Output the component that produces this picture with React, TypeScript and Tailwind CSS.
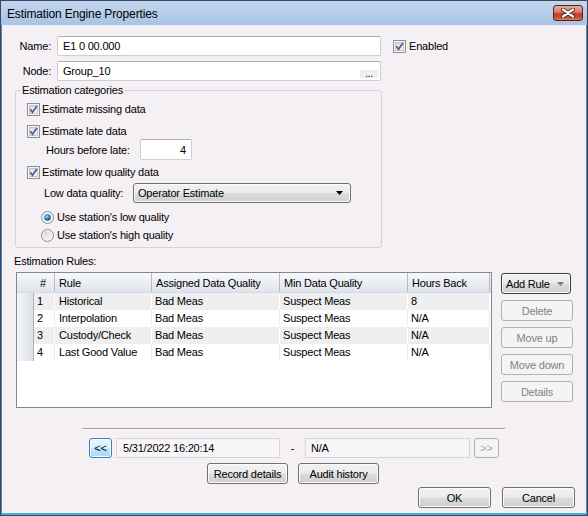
import type { ReactNode } from 'react'

const btnFace =
  'flex items-center rounded-[3px] border bg-[linear-gradient(#f2f2f2_0%,#ebebeb_48%,#dddddd_52%,#cfcfcf_100%)] shadow-[inset_0_0_0_1px_#fbfbfb] text-black'
const btn = `${btnFace} justify-center border-[#707070]`
const btnOff =
  'flex items-center justify-center rounded-[3px] border border-[#adb2b5] bg-[#f4f4f4] text-[#838383]'
const btnHot =
  'flex items-center justify-center rounded-[3px] border border-[#3c7fb1] bg-[linear-gradient(#eaf6fd_0%,#d9f0fc_48%,#bee6fd_52%,#a7d9f5_100%)] shadow-[inset_0_0_0_1px_#f4fbff] text-black'
const field =
  'flex items-center rounded-[2px] border border-[#ccd0d6] border-t-[#abadb3] bg-white'

const CheckBox = () => (
  <svg width="13" height="13" viewBox="0 0 13 13" className="shrink-0" aria-hidden="true">
    <defs>
      <linearGradient id="cb-fill" x1="0" y1="0" x2="1" y2="1">
        <stop offset="0" stopColor="#d8d9db" />
        <stop offset="1" stopColor="#fafafa" />
      </linearGradient>
    </defs>
    <rect x="0.5" y="0.5" width="12" height="12" fill="#f6f6f6" stroke="#8e8f8f" />
    <rect x="2.5" y="2.5" width="8" height="8" fill="url(#cb-fill)" stroke="#c2c4c8" />
    <path d="M3.3 6.3 L5.5 9.2 L9.9 3.1" fill="none" stroke="#4a5f95" strokeWidth="1.7" />
  </svg>
)

const Radio = ({ on }: { on?: boolean }) => (
  <svg width="13" height="13" viewBox="0 0 13 13" className="shrink-0" aria-hidden="true">
    <defs>
      <linearGradient id="rd-ring" x1="0" y1="0" x2="1" y2="1">
        <stop offset="0" stopColor="#d4d4d4" />
        <stop offset="1" stopColor="#fbfbfb" />
      </linearGradient>
      <radialGradient id="rd-on" cx="0.4" cy="0.35" r="0.7">
        <stop offset="0" stopColor="#b9e6ff" />
        <stop offset="0.45" stopColor="#2d8ad0" />
        <stop offset="1" stopColor="#0c427f" />
      </radialGradient>
    </defs>
    <circle cx="6.5" cy="6.5" r="6" fill="#f4f4f4" stroke="#8c8d8f" />
    <circle cx="6.5" cy="6.5" r="4.2" fill="url(#rd-ring)" />
    {on && <circle cx="6.5" cy="6.5" r="3.2" fill="url(#rd-on)" />}
  </svg>
)

const Caret = ({ color }: { color: string }) => (
  <svg width="7" height="4" viewBox="0 0 7 4" className="shrink-0" aria-hidden="true">
    <path d="M0 0 H7 L3.5 4 Z" fill={color} />
  </svg>
)

const CheckRow = ({ children, className }: { children: ReactNode; className: string }) => (
  <div className={`flex h-[16px] items-center gap-[2px] ${className}`}>
    <CheckBox />
    <span>{children}</span>
  </div>
)

const RadioRow = ({ on, children, className }: { on?: boolean; children: ReactNode; className: string }) => (
  <div className={`flex h-[16px] items-center gap-[3px] ${className}`}>
    <Radio on={on} />
    <span>{children}</span>
  </div>
)

const rules = [
  { n: 1, rule: 'Historical', assigned: 'Bad Meas', min: 'Suspect Meas', hours: '8' },
  { n: 2, rule: 'Interpolation', assigned: 'Bad Meas', min: 'Suspect Meas', hours: 'N/A' },
  { n: 3, rule: 'Custody/Check', assigned: 'Bad Meas', min: 'Suspect Meas', hours: 'N/A' },
  { n: 4, rule: 'Last Good Value', assigned: 'Bad Meas', min: 'Suspect Meas', hours: 'N/A' },
]

const RulesTable = () => (
  <div className="h-[136px] w-[476px] border border-[#828790] bg-white">
    <div className="flex h-[20px] items-center border-b border-[#d5dae3] bg-[linear-gradient(#f7f8fa,#dfe4ec)]">
      <div className="h-full w-[38px] border-r border-[#b3bbc9] pl-[23px] leading-[20px]">#</div>
      <div className="h-full w-[97px] border-r border-[#b3bbc9] pl-[4px] leading-[20px]">Rule</div>
      <div className="h-full w-[128px] border-r border-[#b3bbc9] pl-[4px] leading-[20px]">Assigned Data Quality</div>
      <div className="h-full w-[128px] border-r border-[#b3bbc9] pl-[4px] leading-[20px]">Min Data Quality</div>
      <div className="h-full w-[82px] border-r border-[#b3bbc9] pl-[4px] leading-[20px]">Hours Back</div>
    </div>
    {rules.map((r) => {
      const odd = r.n % 2 === 1
      const cell = odd
        ? 'h-full border-r border-white bg-[#efefef]'
        : 'h-full border-r border-[#ededed] bg-white'
      return (
        <div key={r.n} className="flex h-[17px] leading-[17px]">
          <div className="h-full w-[17px] border-r border-[#a9b1bf] bg-[linear-gradient(90deg,#f3f5f8,#dde2ea)]" />
          <div className={`${cell} w-[21px] pl-[3px]`}>{r.n}</div>
          <div className={`${cell} w-[97px] pl-[4px]`}>{r.rule}</div>
          <div className={`${cell} w-[128px] pl-[3px]`}>{r.assigned}</div>
          <div className={`${cell} w-[128px] pl-[3px]`}>{r.min}</div>
          <div className={`${cell} w-[82px] pl-[3px]`}>{r.hours}</div>
        </div>
      )
    })}
  </div>
)

export default function App() {
  return (
    <div className="flex h-[516px] w-[588px] flex-col border border-[#37475e] font-['Liberation_Sans',Arial,sans-serif] text-[11px] leading-[14px] tracking-[-0.2px] text-black">
      {/* title bar */}
      <div className="flex h-[24px] shrink-0 items-start justify-between bg-[linear-gradient(#c2d6ee,#a8c4e6)] pl-[6px] pr-[4px]">
        <span className="mt-[6px] text-[12px] tracking-[-0.15px]">Estimation Engine Properties</span>
        <div className="mt-[4px] flex h-[16px] w-[30px] items-center justify-center rounded-[3px] border border-[#5b1c15] bg-[linear-gradient(#e8ab9b_0%,#d47d68_45%,#c0442c_52%,#c44a30_78%,#d9805f_100%)]">
          <svg width="14" height="10" viewBox="0 0 14 10" aria-hidden="true">
            <path d="M2 1.5 L12 8.5 M12 1.5 L2 8.5" stroke="#4a2520" strokeWidth="4" strokeLinecap="round" />
            <path d="M2 1.5 L12 8.5 M12 1.5 L2 8.5" stroke="#ffffff" strokeWidth="2.2" strokeLinecap="round" />
          </svg>
        </div>
      </div>

      {/* body */}
      <div className="flex flex-1 flex-col border-x border-b-2 border-x-[#5b7fae] border-b-[#3fb1dc] bg-[#f4f0f4]">
        <div className="mt-[11px] flex h-[20px] items-center">
          <span className="w-[49px] text-right">Name:</span>
          <div className={`${field} ml-[6px] h-[20px] w-[324px] pl-[5px]`}>E1 0 00.000</div>
          <div className="ml-[12px] flex items-center gap-[3px]">
            <CheckBox />
            <span>Enabled</span>
          </div>
        </div>

        <div className="mt-[5px] flex h-[20px] items-center">
          <span className="w-[49px] text-right">Node:</span>
          <div className={`${field} ml-[6px] h-[20px] w-[324px] justify-between pl-[5px]`}>
            <span>Group_10</span>
            <span className="mr-[2px] mt-[5px] flex h-[8px] w-[18px] items-end justify-center bg-[#efefef] text-[10px] leading-[8px]">...</span>
          </div>
        </div>

        <fieldset className="ml-[13px] mt-[2px] w-[367px] rounded-[3px] border border-[#d0d4da] pb-[4px]">
          <legend className="ml-[5px] px-[1px] leading-[14px]">Estimation categories</legend>
          <CheckRow className="mt-[4px] pl-[11px]">Estimate missing data</CheckRow>
          <CheckRow className="mt-[6px] pl-[11px]">Estimate late data</CheckRow>
          <div className="flex h-[21px] items-center pl-[30px]">
            <span className="w-[94px]">Hours before late:</span>
            <div className={`${field} h-[21px] w-[52px] justify-end pr-[5px]`}>4</div>
          </div>
          <CheckRow className="mt-[4px] pl-[11px]">Estimate low quality data</CheckRow>
          <div className="mt-[3px] flex h-[20px] items-center pl-[28px]">
            <span className="w-[89px]">Low data quality:</span>
            <div className={`${btnFace} h-[20px] w-[218px] justify-between border-[#707070] pl-[4px] pr-[7px]`}>
              <span>Operator Estimate</span>
              <Caret color="#000000" />
            </div>
          </div>
          <RadioRow on className="mt-[6px] pl-[25px]">Use station's low quality</RadioRow>
          <RadioRow className="mt-[2px] pl-[25px]">Use station's high quality</RadioRow>
        </fieldset>

        <div className="ml-[12px] mt-[6px] h-[14px]">Estimation Rules:</div>

        <div className="ml-[14px] mt-[4px] flex items-start">
          <RulesTable />
          <div className="ml-[9px] mt-[1px] flex w-[72px] flex-col gap-[6px]">
            <div className={`${btnFace} h-[21px] w-[70px] justify-between border-[#3d3d3d] pl-[4px] pr-[6px]`}>
              <span>Add Rule</span>
              <Caret color="#7c7c7c" />
            </div>
            <div className={`${btnOff} h-[21px] w-[72px]`}>Delete</div>
            <div className={`${btnOff} h-[21px] w-[72px]`}>Move up</div>
            <div className={`${btnOff} h-[21px] w-[72px]`}>Move down</div>
            <div className={`${btnOff} h-[21px] w-[72px]`}>Details</div>
          </div>
        </div>

        <div className="ml-[80px] mt-[20px] h-[2px] w-[423px] border-b border-t border-b-white border-t-[#a0a0a0]" />

        <div className="ml-[87px] mt-[8px] flex h-[20px] items-center">
          <div className={`${btnHot} h-[20px] w-[23px]`}>&lt;&lt;</div>
          <div className="ml-[4px] flex h-[20px] w-[164px] items-center border border-[#d2d5da] bg-[#f7f5f7] pl-[6px]">5/31/2022 16:20:14</div>
          <span className="w-[25px] text-center">-</span>
          <div className="flex h-[20px] w-[165px] items-center border border-[#d2d5da] bg-[#f7f5f7] pl-[5px]">N/A</div>
          <div className={`${btnOff} ml-[4px] h-[20px] w-[25px] text-[#a8a8a8]`}>&gt;&gt;</div>
        </div>

        <div className="ml-[205px] mt-[5px] flex gap-[10px]">
          <div className={`${btn} h-[21px] w-[81px]`}>Record details</div>
          <div className={`${btn} h-[21px] w-[81px]`}>Audit history</div>
        </div>

        <div className="mr-[11px] mt-[3px] flex justify-end gap-[11px]">
          <div className={`${btn} h-[21px] w-[73px]`}>OK</div>
          <div className={`${btn} h-[21px] w-[73px]`}>Cancel</div>
        </div>
      </div>
    </div>
  )
}
